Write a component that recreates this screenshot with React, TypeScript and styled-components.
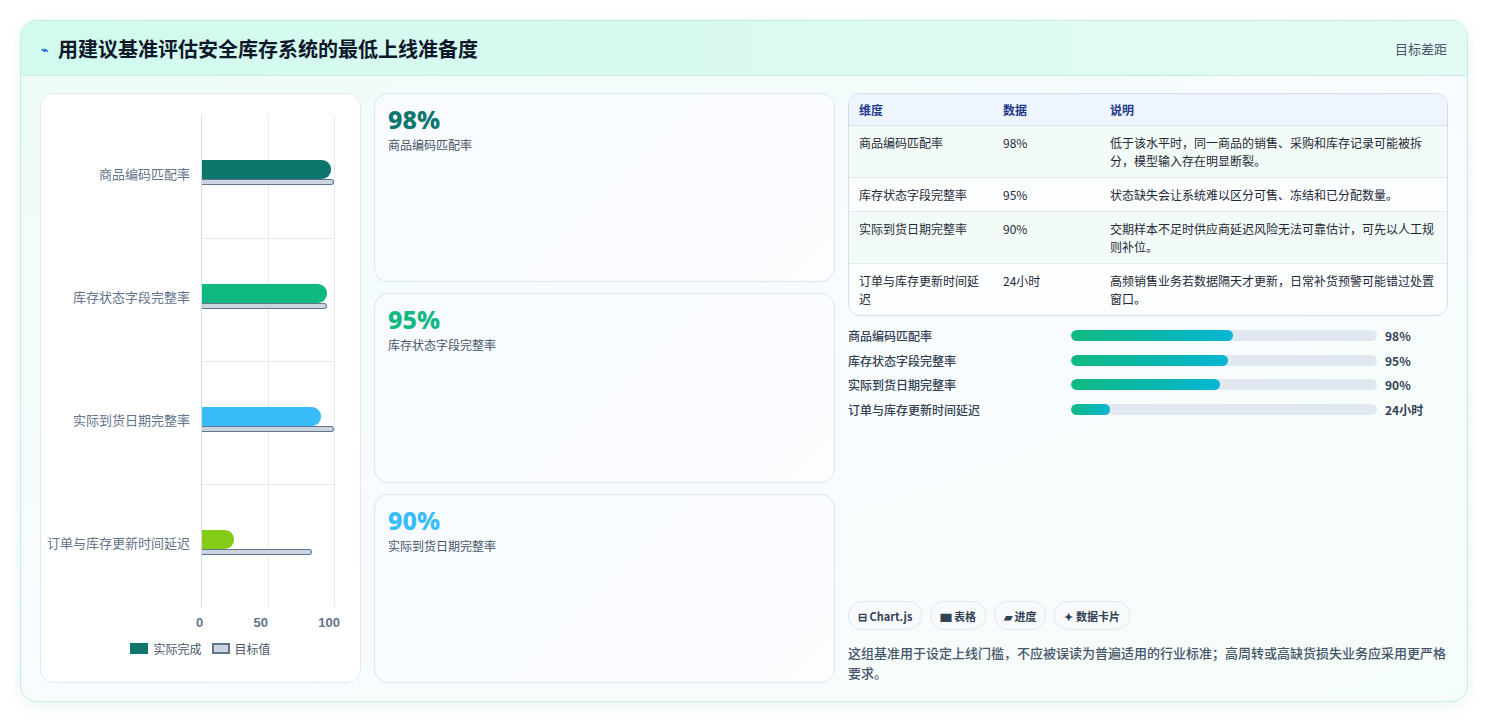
import React from "react";
import styled, { createGlobalStyle } from "styled-components";

const Global = createGlobalStyle`
  body { margin: 0; background: #ffffff; font-family: "Noto Sans CJK SC", "Noto Sans", sans-serif; }
`;

const rows = [
  { name: "商品编码匹配率", value: "98%", actual: 98, target: 100, color: "#0f766e", fill: 0.53, note: "低于该水平时，同一商品的销售、采购和库存记录可能被拆分，模型输入存在明显断裂。" },
  { name: "库存状态字段完整率", value: "95%", actual: 95, target: 95, color: "#10b981", fill: 0.513, note: "状态缺失会让系统难以区分可售、冻结和已分配数量。" },
  { name: "实际到货日期完整率", value: "90%", actual: 90, target: 100, color: "#38bdf8", fill: 0.487, note: "交期样本不足时供应商延迟风险无法可靠估计，可先以人工规则补位。" },
  { name: "订单与库存更新时间延迟", value: "24小时", actual: 24, target: 83, color: "#84cc16", fill: 0.127, note: "高频销售业务若数据隔天才更新，日常补货预警可能错过处置窗口。" },
];

const Page = styled.div`
  padding: 20px 21px 20px 20px;
`;
const Card = styled.div`
  border: 1px solid #bff0dc;
  border-radius: 16px;
  overflow: hidden;
  background: linear-gradient(160deg, #eefcf6 0%, #f8fbff 50%, #f5fdf9 100%);
  box-shadow: 0 4px 16px rgba(16, 120, 100, 0.08);
`;
const Header = styled.div`
  height: 54px;
  display: flex;
  align-items: center;
  justify-content: space-between;
  padding: 0 20px;
  background: linear-gradient(90deg, #d2faee, #e3fbf4);
  border-bottom: 1px solid #c9efe2;
`;
const Title = styled.h1`
  margin: 0;
  font-size: 20px;
  font-weight: 700;
  color: #0f172a;
  display: flex;
  align-items: center;
  gap: 10px;
`;
const HeadLink = styled.span`
  font-size: 13px;
  color: #475569;
`;
const Body = styled.div`
  display: grid;
  grid-template-columns: 321px 461px 600px;
  gap: 13px;
  padding: 17px 19px 18px 19px;
  height: 590px;
`;
const Panel = styled.div`
  background: #fff;
  border: 1px solid #e2e8f0;
  border-radius: 14px;
  display: flex;
  flex-direction: column;
`;
const ChartGrid = styled.div`
  display: grid;
  grid-template-columns: 160px 134px;
  padding: 21px 0 0 0;
`;
const Labels = styled.div`
  display: flex;
  flex-direction: column;
`;
const Label = styled.div`
  height: 123px;
  line-height: 118px;
  text-align: right;
  padding-right: 11px;
  font-size: 13px;
  color: #64748b;
  white-space: nowrap;
  overflow: hidden;
  direction: rtl;
`;
const Plot = styled.div`
  position: relative;
  border-left: 1px solid #d6dde7;
  border-right: 1px solid #e6ebf1;
  background: linear-gradient(90deg, transparent 66px, #e6ebf1 66px, #e6ebf1 67px, transparent 67px);
`;
const Band = styled.div`
  height: 123px;
  border-top: 1px solid #e6ebf1;
  display: flex;
  flex-direction: column;
  justify-content: center;
  padding-bottom: 8px;
  box-sizing: border-box;
  &:first-child { border-top: none; }
`;
const ActualBar = styled.div<{ $c: string }>`
  height: 19px;
  background: ${(p) => p.$c};
  border-radius: 0 9px 9px 0;
`;
const TargetBar = styled.div`
  height: 6px;
  background: #cbd5e1;
  border: 1.5px solid #64748b;
  border-left: none;
  border-radius: 0 4px 4px 0;
  box-sizing: border-box;
`;
const Axis = styled.div`
  display: flex;
  justify-content: space-between;
  width: 144px;
  margin-left: 155px;
  padding-top: 8px;
  font-size: 13px;
  font-weight: 600;
  color: #64748b;
  font-family: "Liberation Sans", sans-serif;
`;
const Legend = styled.div`
  display: flex;
  justify-content: center;
  gap: 10px;
  margin-top: 10px;
  font-size: 12px;
  color: #475569;
`;
const LegendItem = styled.span`
  display: flex;
  align-items: center;
  gap: 5px;
`;
const Swatch = styled.span<{ $outline?: boolean }>`
  width: 18px;
  height: 11px;
  box-sizing: border-box;
  background: ${(p) => (p.$outline ? "#cbd5e1" : "#0f766e")};
  border: ${(p) => (p.$outline ? "2px solid #64748b" : "none")};
`;
const Stats = styled.div`
  display: grid;
  grid-template-rows: repeat(3, 1fr);
  gap: 11px;
`;
const Stat = styled.div`
  background: linear-gradient(135deg, #f7faff, #fbfdff);
  border: 1px solid #dde6ef;
  border-radius: 14px;
  padding: 9px 13px;
`;
const StatValue = styled.div<{ $c: string }>`
  font-size: 25px;
  font-weight: 800;
  color: ${(p) => p.$c};
  font-family: "Noto Sans", sans-serif;
  line-height: 32px;
`;
const StatLabel = styled.div`
  font-size: 12px;
  color: #475569;
  margin-top: 1px;
`;
const Right = styled.div`
  display: flex;
  flex-direction: column;
`;
const Table = styled.table`
  width: 100%;
  border-collapse: separate;
  border-spacing: 0;
  border: 1px solid #d5dde8;
  border-radius: 12px;
  overflow: hidden;
  font-size: 12px;
  background: #fbfdff;
  th {
    background: #eef5ff;
    color: #1e3a8a;
    font-weight: 700;
    text-align: left;
    height: 31px;
    padding: 0 10px;
    border-bottom: 1px solid #d5dde8;
  }
  td {
    color: #1f2937;
    vertical-align: top;
    padding: 8px 10px 7px;
    line-height: 18px;
    border-top: 1px solid #e4eaf1;
  }
  tr:first-child td { border-top: none; }
  tr:nth-child(odd) td { background: #f3fbf8; }
`;
const Progress = styled.div`
  display: flex;
  flex-direction: column;
  gap: 9px;
  margin-top: 11px;
`;
const PRow = styled.div`
  display: grid;
  grid-template-columns: 223px 306px 1fr;
  align-items: center;
  font-size: 12px;
  font-weight: 500;
  color: #334155;
  height: 15.5px;
`;
const Track = styled.div`
  height: 11px;
  border-radius: 6px;
  background: #e2e8f0;
  overflow: hidden;
`;
const Fill = styled.div`
  height: 100%;
  border-radius: 6px;
  background: linear-gradient(90deg, #10b981, #06b6d4);
`;
const PVal = styled.span`
  padding-left: 8px;
  font-weight: 700;
`;
const Tags = styled.div`
  margin-top: auto;
  display: flex;
  gap: 8px;
`;
const Tag = styled.span`
  height: 27px;
  padding: 0 9px;
  border: 1px solid #e2e8f0;
  border-radius: 14px;
  background: #f8fafc;
  font-size: 11px;
  font-weight: 700;
  color: #334155;
  display: flex;
  align-items: center;
`;
const Note = styled.p`
  margin: 13px 0 0;
  font-size: 13px;
  line-height: 20px;
  color: #475569;
  font-weight: 500;
`;

export default function App() {
  return (
    <>
      <Global />
      <Page>
        <Card>
          <Header>
            <Title>
              <span style={{ color: "#2563eb", fontSize: 12 }}>⌁</span>
              用建议基准评估安全库存系统的最低上线准备度
            </Title>
            <HeadLink>目标差距</HeadLink>
          </Header>
          <Body>
            <Panel>
              <ChartGrid>
                <Labels>
                  {rows.map((r) => (
                    <Label key={r.name}>{r.name}</Label>
                  ))}
                </Labels>
                <Plot>
                  {rows.map((r) => (
                    <Band key={r.name}>
                      <ActualBar $c={r.color} style={{ width: `${r.actual}%` }} />
                      <TargetBar style={{ width: `${r.target}%` }} />
                    </Band>
                  ))}
                </Plot>
              </ChartGrid>
              <Axis>
                <span>0</span>
                <span>50</span>
                <span>100</span>
              </Axis>
              <Legend>
                <LegendItem>
                  <Swatch />
                  实际完成
                </LegendItem>
                <LegendItem>
                  <Swatch $outline />
                  目标值
                </LegendItem>
              </Legend>
            </Panel>
            <Stats>
              {rows.slice(0, 3).map((r) => (
                <Stat key={r.name}>
                  <StatValue $c={r.color}>{r.value}</StatValue>
                  <StatLabel>{r.name}</StatLabel>
                </Stat>
              ))}
            </Stats>
            <Right>
              <Table>
                <thead>
                  <tr>
                    <th style={{ width: 124 }}>维度</th>
                    <th style={{ width: 87 }}>数据</th>
                    <th>说明</th>
                  </tr>
                </thead>
                <tbody>
                  {rows.map((r) => (
                    <tr key={r.name}>
                      <td>{r.name}</td>
                      <td>{r.value}</td>
                      <td>{r.note}</td>
                    </tr>
                  ))}
                </tbody>
              </Table>
              <Progress>
                {rows.map((r) => (
                  <PRow key={r.name}>
                    <span>{r.name}</span>
                    <Track>
                      <Fill style={{ width: `${r.fill * 100}%` }} />
                    </Track>
                    <PVal>{r.value}</PVal>
                  </PRow>
                ))}
              </Progress>
              <Tags>
                <Tag>⊟ Chart.js</Tag>
                <Tag>▆ 表格</Tag>
                <Tag>▰ 进度</Tag>
                <Tag>✦ 数据卡片</Tag>
              </Tags>
              <Note>这组基准用于设定上线门槛，不应被误读为普遍适用的行业标准；高周转或高缺货损失业务应采用更严格要求。</Note>
            </Right>
          </Body>
        </Card>
      </Page>
    </>
  );
}
